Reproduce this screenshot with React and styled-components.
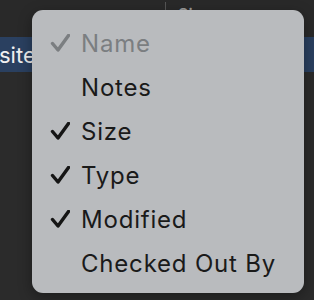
import React from "react";
import styled, { createGlobalStyle } from "styled-components";

const Global = createGlobalStyle`
  html, body { margin: 0; padding: 0; background: #2b2b2b; }
  body { font-family: Inter, "Liberation Sans", sans-serif; }
`;

const items = [
  { label: "Name", checked: true, disabled: true },
  { label: "Notes", checked: false },
  { label: "Size", checked: true },
  { label: "Type", checked: true },
  { label: "Modified", checked: true },
  { label: "Checked Out By", checked: false },
];

const Check = ({ color }) => (
  <svg width="20" height="18" viewBox="0 0 20 18">
    <path
      d="M2.5 9.5 L8 16 L18.5 1.5"
      fill="none"
      stroke={color}
      strokeWidth="3.4"
      strokeLinecap="round"
      strokeLinejoin="round"
    />
  </svg>
);

const App = () => {
  return (
    <Screen>
      <Global />
      <Header>
        <HeaderCell w={165} />
        <Divider />
        <HeaderCell w={148}>Size</HeaderCell>
      </Header>
      <SelectedRow>
        <FileName>site</FileName>
      </SelectedRow>
      <Menu>
        {items.map((it) => (
          <Item key={it.label} disabled={it.disabled}>
            <CheckSlot>
              {it.checked && <Check color={it.disabled ? "#7b7e81" : "#151515"} />}
            </CheckSlot>
            {it.label}
          </Item>
        ))}
      </Menu>
    </Screen>
  );
};

export default App;

const Screen = styled.div`
  position: relative;
  width: 314px;
  height: 300px;
  overflow: hidden;
  background: #2b2b2b;
`;

const Header = styled.div`
  display: flex;
  align-items: flex-start;
  height: 37px;
  background: #292929;
`;

const HeaderCell = styled.div`
  width: ${(p) => p.w}px;
  padding: 4px 0 0 12px;
  box-sizing: border-box;
  color: #9a9a9a;
  font-size: 16px;
  font-weight: 600;
`;

const Divider = styled.div`
  width: 1px;
  height: 11px;
  margin-top: 2px;
  background: #555;
`;

const SelectedRow = styled.div`
  display: flex;
  align-items: center;
  height: 35px;
  background: #2a4060;
`;

const FileName = styled.span`
  color: #f0f0f0;
  font-size: 22px;
  margin-left: -1px;
`;

const Menu = styled.div`
  position: absolute;
  left: 32px;
  top: 10px;
  width: 272px;
  height: 283px;
  box-sizing: border-box;
  padding: 11px 0 0 18px;
  border-radius: 11px;
  background: #b9bbbe;
  box-shadow: 0 4px 14px rgba(0, 0, 0, 0.35);
  display: flex;
  flex-direction: column;
`;

const Item = styled.div`
  display: flex;
  align-items: center;
  gap: 11px;
  height: 44px;
  font-size: 24px;
  letter-spacing: 0.8px;
  color: ${(p) => (p.disabled ? "#7b7e81" : "#1a1a1a")};
`;

const CheckSlot = styled.span`
  display: flex;
  width: 20px;
  justify-content: center;
`;
